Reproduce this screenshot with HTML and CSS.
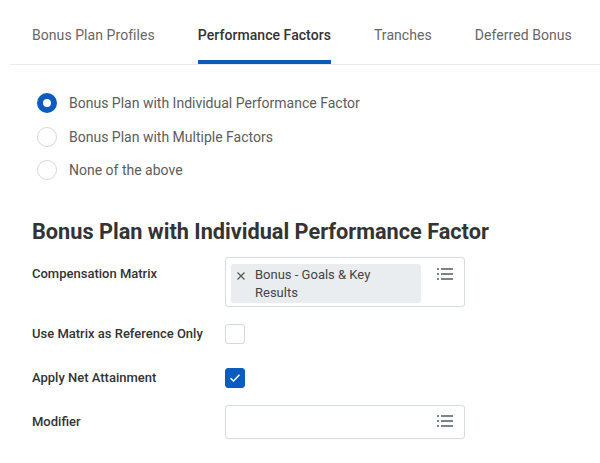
FILE: index.html
```html
<!DOCTYPE html>
<html lang="en">

<head>
    <meta charset="UTF-8">
    <meta name="viewport" content="width=device-width, initial-scale=1.0">
    <title>Bonus Plan</title>
    <link rel="stylesheet" href="styles.css">
</head>

<body>
    <nav class="tabs">
        <div class="tab">Bonus Plan Profiles</div>
        <div class="tab active">Performance Factors</div>
        <div class="tab">Tranches</div>
        <div class="tab">Deferred Bonus</div>
    </nav>

    <div class="radios">
        <label class="radio-row"><span class="radio checked"></span>Bonus Plan with Individual Performance Factor</label>
        <label class="radio-row"><span class="radio"></span>Bonus Plan with Multiple Factors</label>
        <label class="radio-row"><span class="radio"></span>None of the above</label>
    </div>

    <h2 class="section-title">Bonus Plan with Individual Performance Factor</h2>

    <div class="form">
        <div class="label">Compensation Matrix</div>
        <div class="field">
            <div class="box">
                <span class="chip">
                    <svg class="chip-x" width="8" height="8" viewBox="0 0 8 8">
                        <path d="M0.5 0.5 L7.5 7.5 M7.5 0.5 L0.5 7.5" stroke="#555" stroke-width="1.2" fill="none" />
                    </svg>
                    Bonus - Goals &amp; Key Results
                </span>
                <svg class="list-icon" width="16" height="14" viewBox="0 0 16 14">
                    <g fill="#7b8389">
                        <rect x="0" y="1" width="2" height="2" />
                        <rect x="4" y="1" width="12" height="2" />
                        <rect x="0" y="6" width="2" height="2" />
                        <rect x="4" y="6" width="12" height="2" />
                        <rect x="0" y="11" width="2" height="2" />
                        <rect x="4" y="11" width="12" height="2" />
                    </g>
                </svg>
            </div>
        </div>

        <div class="label">Use Matrix as Reference Only</div>
        <div class="field check-field"><span class="checkbox"></span></div>

        <div class="label">Apply Net Attainment</div>
        <div class="field check-field">
            <span class="checkbox checked">
                <svg width="12" height="10" viewBox="0 0 12 10">
                    <path d="M1.5 5.2 L4.5 8 L10.5 1.8" stroke="#fff" stroke-width="1.5" fill="none" />
                </svg>
            </span>
        </div>

        <div class="label">Modifier</div>
        <div class="field">
            <div class="box empty">
                <svg class="list-icon" width="16" height="14" viewBox="0 0 16 14">
                    <g fill="#7b8389">
                        <rect x="0" y="1" width="2" height="2" />
                        <rect x="4" y="1" width="12" height="2" />
                        <rect x="0" y="6" width="2" height="2" />
                        <rect x="4" y="6" width="12" height="2" />
                        <rect x="0" y="11" width="2" height="2" />
                        <rect x="4" y="11" width="12" height="2" />
                    </g>
                </svg>
            </div>
        </div>
    </div>
</body>

</html>
```

FILE: styles.css
```css
body {
    margin: 0px;
    background: #fff;
    font-family: Roboto, "Liberation Sans", sans-serif;
    color: #333;
}

/* tab bar */
.tabs {
    display: flex;
    gap: 43px;
    margin-left: 10px;
    padding-left: 22px;
    height: 64px;
    border-bottom: 1px solid #e8eaec;
}

.tab {
    box-sizing: border-box;
    height: 64px;
    padding-top: 25px;
    font-size: 14px;
    line-height: 20px;
    letter-spacing: 0.06px;
    color: #666;
    border-bottom: 4px solid transparent;
}

.tab.active {
    color: #333;
    font-weight: 500;
    border-bottom-color: #0b5cbf;
}

/* radio group */
.radios {
    display: flex;
    flex-direction: column;
    gap: 13.5px;
    margin-top: 28px;
    padding-left: 37px;
}

.radio-row {
    display: flex;
    align-items: center;
    gap: 12px;
    font-size: 14px;
    line-height: 20px;
    color: #5c5c5c;
}

.radio {
    box-sizing: border-box;
    width: 20px;
    height: 20px;
    border-radius: 50%;
    border: 1px solid #d3d9de;
}

.radio.checked {
    border: 6px solid #0b5cbf;
}

.section-title {
    margin: 38px 0 0 32px;
    font-size: 21.7px;
    line-height: 28px;
    font-weight: 700;
    color: #333;
}

/* form grid */
.form {
    display: grid;
    grid-template-columns: 193px 240px;
    row-gap: 10px;
    margin: 11px 0 0 32px;
}

.label {
    padding-top: 8px;
    font-size: 13px;
    line-height: 17px;
    font-weight: 500;
    color: #333;
}

.field {
    min-height: 34px;
}

.check-field {
    display: flex;
    align-items: center;
}

.box {
    box-sizing: border-box;
    display: flex;
    align-items: flex-start;
    justify-content: space-between;
    border: 1px solid #d6dbe0;
    border-radius: 3px;
    padding: 6px 11px 3px 5px;
}

.box.empty {
    height: 34px;
    justify-content: flex-end;
    padding-top: 8px;
}

.chip {
    box-sizing: border-box;
    position: relative;
    width: 190px;
    padding: 2px 12px 1px 24px;
    background: #e9edf0;
    border-radius: 3px;
    font-size: 13px;
    line-height: 18px;
    color: #444;
}

/* the remove cross sits in the chip's left padding */
.chip-x {
    position: absolute;
    left: 6px;
    top: 8px;
}

.box .list-icon {
    margin-top: 3px;
}

.box.empty .list-icon {
    margin-top: 0;
}

.checkbox {
    box-sizing: border-box;
    display: flex;
    align-items: center;
    justify-content: center;
    width: 20px;
    height: 20px;
    border: 1px solid #d3d9de;
    border-radius: 3px;
}

.checkbox.checked {
    background: #0b5cbf;
    border-color: #0b5cbf;
}
```
